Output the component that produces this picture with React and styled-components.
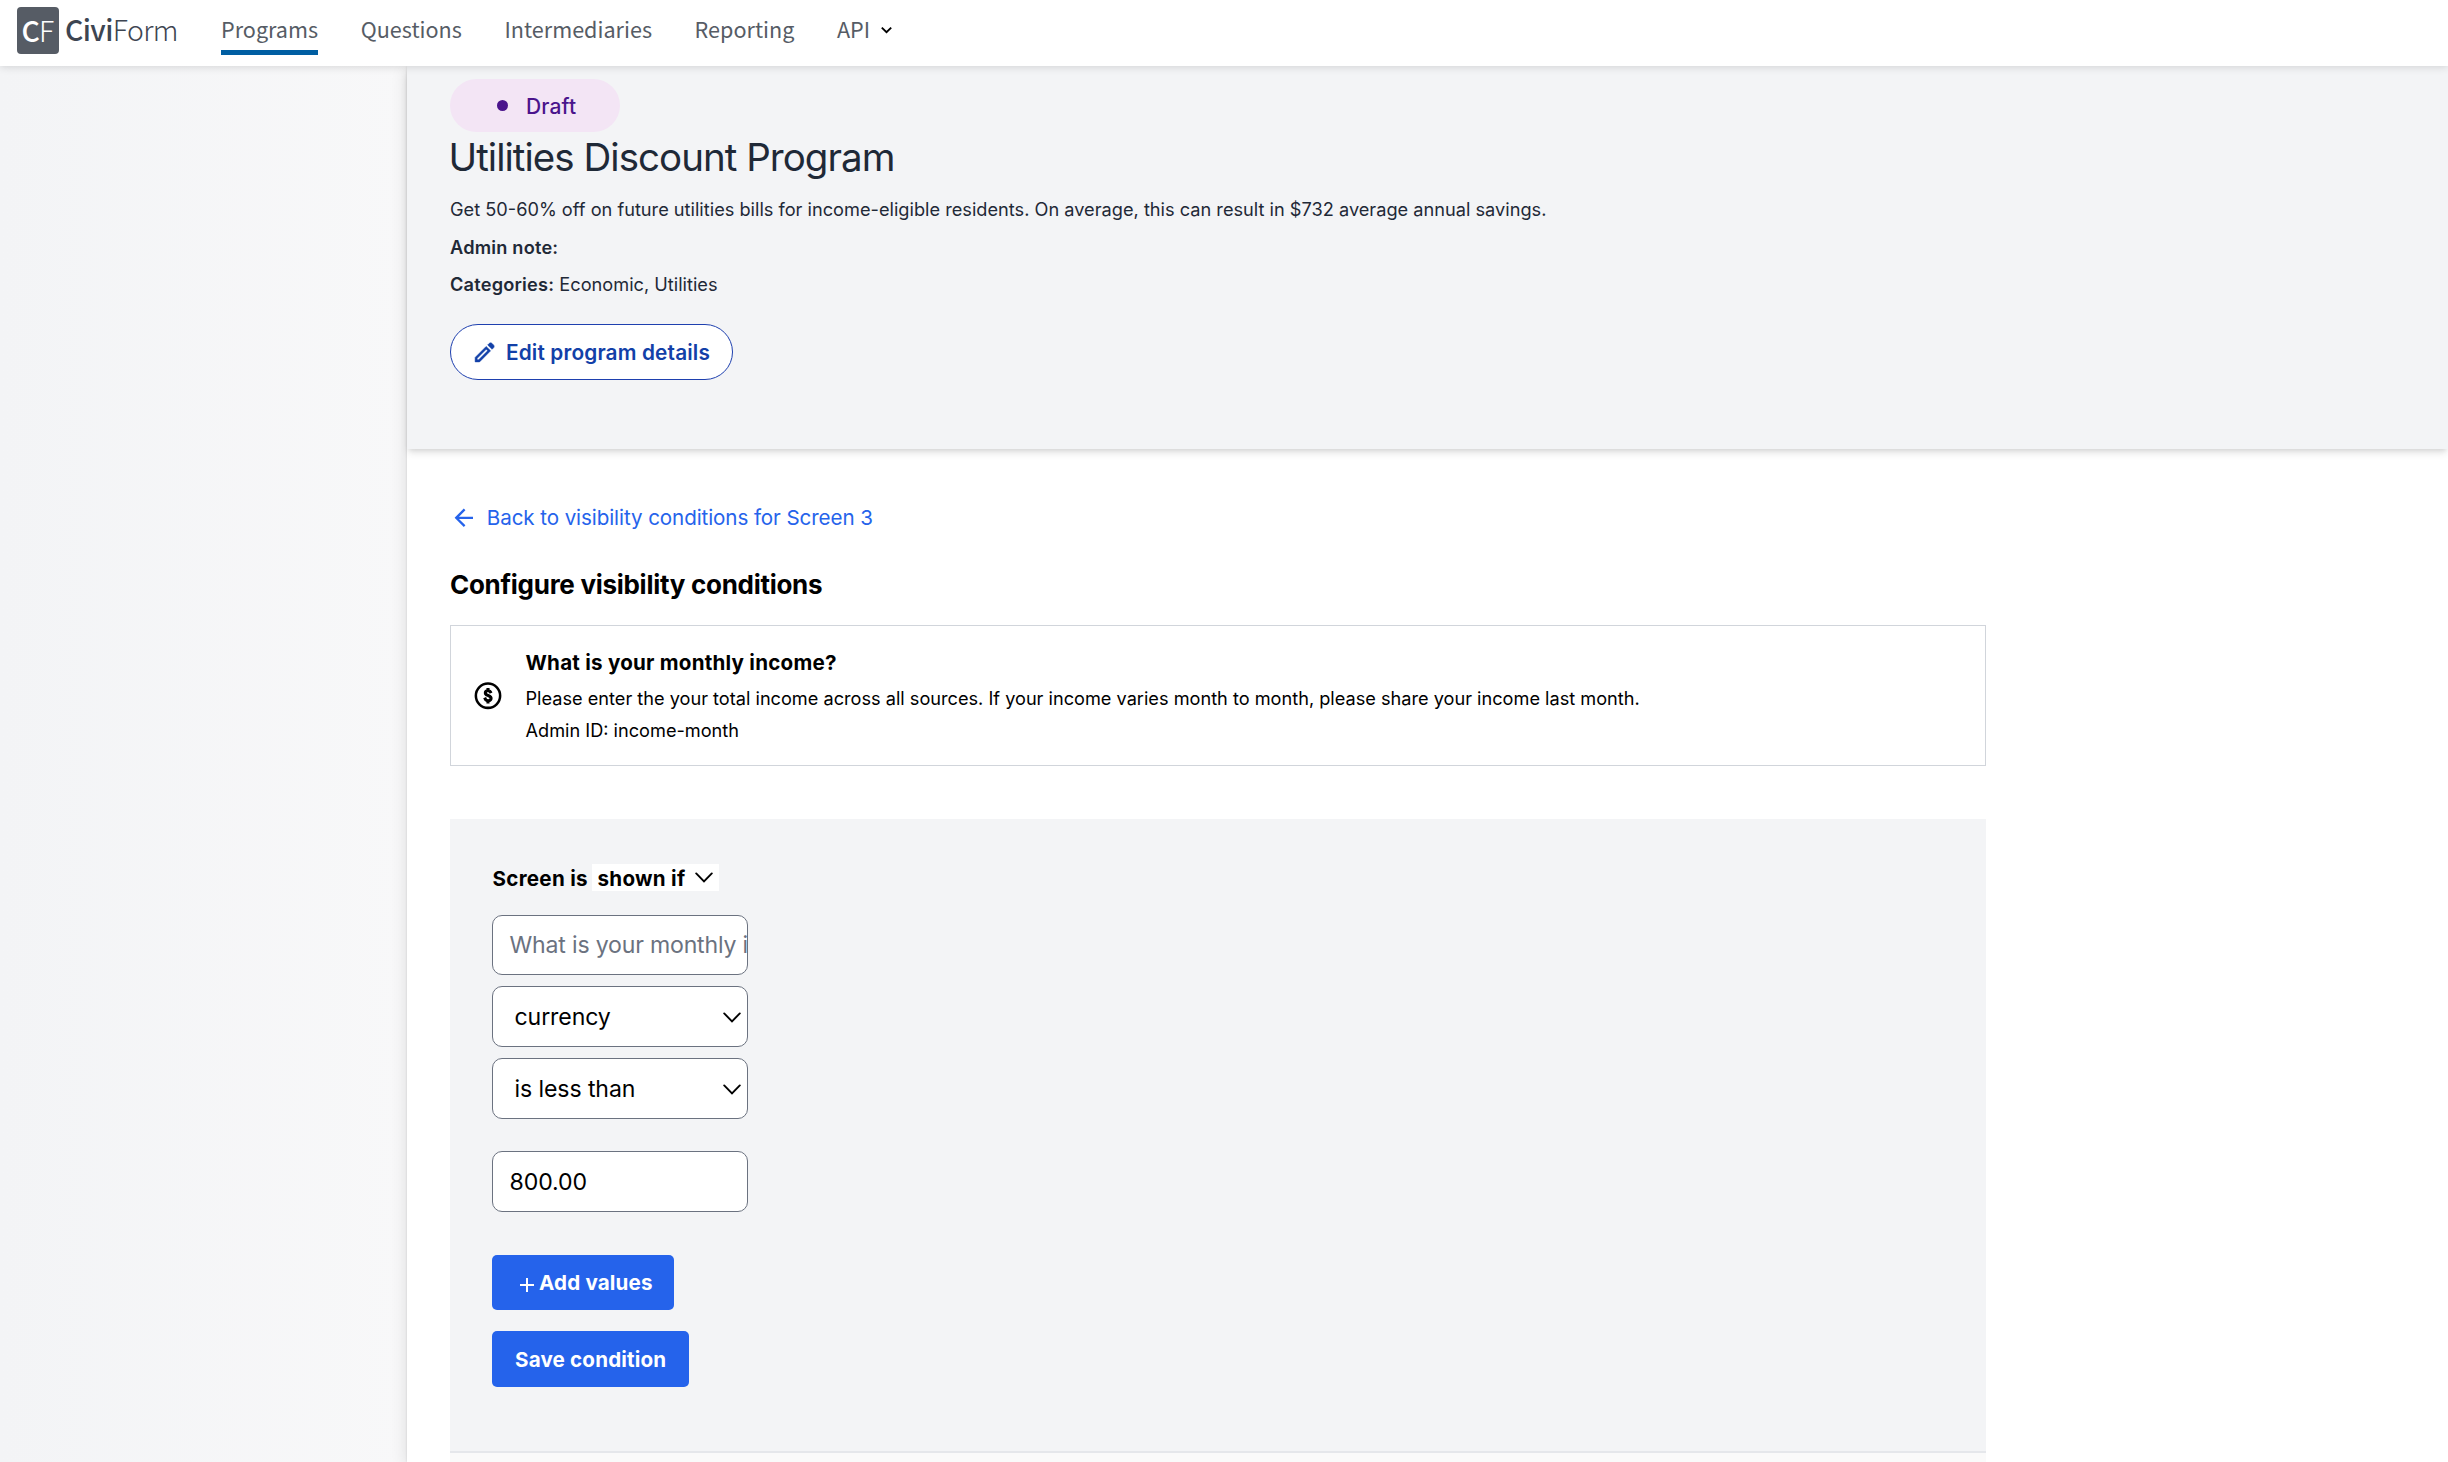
import React from "react";
import styled, { createGlobalStyle } from "styled-components";

const GlobalStyle = createGlobalStyle`
  *, *::before, *::after { box-sizing: border-box; }
  body {
    margin: 0;
    background: #fff;
    color: #000;
    font-family: Inter, "Liberation Sans", sans-serif;
  }
`;

const Page = styled.div`
  display: flex;
  flex-direction: column;
  height: 1462px;
  overflow: hidden;
`;

/* ---------- top navigation ---------- */

const TopBar = styled.header`
  position: relative;
  z-index: 2;
  display: flex;
  align-items: flex-start;
  flex: none;
  height: 66px;
  padding-left: 17px;
  background: #fff;
  box-shadow: 0 1px 8px rgba(0, 0, 0, 0.14);
  font-family: "Noto Sans CJK SC", "Noto Sans", sans-serif;
`;

const Brand = styled.a`
  display: flex;
  gap: 6px;
  width: 204px;
  padding-top: 7px;
  color: #3d4551;
  font-size: 28.4px;
  line-height: 42px;
  white-space: pre;
`;

const BrandMark = styled.span`
  display: flex;
  width: 42px;
  height: 47px;
  padding: 2px 0 0 4.5px;
  border-radius: 4px;
  background: #565c65;
  color: #fff;
  letter-spacing: -0.8px;
`;

const BrandName = styled.span`
  padding-top: 1px;
  letter-spacing: -0.6px;
`;

const Strong = styled.span`
  font-weight: 500;
`;

const Thin = styled.span`
  font-weight: 300;
`;

const Nav = styled.nav`
  display: flex;
  gap: 42.6px;
  padding-top: 16px;
`;

const NavLink = styled.a`
  display: flex;
  align-items: center;
  gap: 10.5px;
  height: 39px;
  padding-bottom: 8px;
  border-bottom: 5px solid ${(p) => (p.$active ? "#005ea2" : "transparent")};
  color: #565c65;
  font-size: 21.6px;
  line-height: 26px;

  svg {
    margin-top: 2px;
  }
`;

/* ---------- page frame ---------- */

const Frame = styled.div`
  display: flex;
  flex: 1;
  min-height: 0;
`;

const Sidebar = styled.aside`
  flex: none;
  width: 407px;
  background: linear-gradient(to right, #f3f4f6, #f8f8f9);
`;

const Main = styled.main`
  flex: 1;
  background: #fff;
  box-shadow: 0 0 2px rgba(0, 0, 0, 0.12), 0 4px 16px rgba(0, 0, 0, 0.12);
`;

const ProgramHeader = styled.section`
  display: flex;
  flex-direction: column;
  align-items: flex-start;
  height: 383px;
  padding: 13px 43px 0;
  background: #f3f4f6;
  color: #1f2937;
  box-shadow: 0 5px 8px -1px rgba(0, 0, 0, 0.1), 0 3px 5px -2px rgba(0, 0, 0, 0.1);
`;

const StatusPill = styled.div`
  display: flex;
  align-items: center;
  gap: 18px;
  width: 170px;
  height: 53px;
  padding-left: 46.5px;
  border-radius: 27px;
  background: #f3e5f5;
  color: #4a148c;
  font-size: 21px;
  font-weight: 500;
  letter-spacing: 0.15px;
`;

const StatusText = styled.span`
  padding-top: 1px;
`;

const Dot = styled.span`
  width: 11.5px;
  height: 11.5px;
  border-radius: 50%;
  background: currentColor;
`;

const ProgramTitle = styled.h1`
  margin: 1px 0 15px -1.5px;
  font-size: 38.5px;
  font-weight: 400;
  line-height: 49px;
  letter-spacing: -0.97px;
`;

const ProgramText = styled.p`
  margin: 0 0 ${(p) => p.$after}px;
  font-size: 18.2px;
  line-height: 25px;
  white-space: pre;
`;

const Label = styled.span`
  font-weight: 600;
  letter-spacing: 0.2px;
`;

const EditButton = styled.button`
  display: flex;
  align-items: center;
  gap: 9.5px;
  width: 283px;
  height: 56px;
  padding: 0 0 0 20.5px;
  border: 1px solid #1e40af;
  border-radius: 28px;
  background: #fff;
  color: #1240a8;
  font-family: inherit;
  font-size: 20.8px;
  font-weight: 600;
  letter-spacing: 0.15px;
`;

/* ---------- condition editor ---------- */

const Content = styled.section`
  display: flex;
  flex-direction: column;
  width: 1622px;
  padding: 55px 43px 0;
`;

const BackLink = styled.a`
  display: flex;
  align-items: center;
  gap: 9.2px;
  height: 28px;
  color: #2563eb;
  font-size: 20.6px;
  line-height: 28px;
  letter-spacing: -0.09px;
`;

const Heading = styled.h2`
  margin: 36px 0 23px;
  font-size: 26px;
  font-weight: 700;
  line-height: 34px;
  letter-spacing: -0.28px;
`;

const QuestionCard = styled.div`
  display: flex;
  align-items: center;
  gap: 21.5px;
  height: 141px;
  padding-left: 21px;
  border: 1px solid #d1d5db;
`;

const QuestionTitle = styled.div`
  margin-bottom: 9px;
  font-size: 20.6px;
  font-weight: 700;
  line-height: 28px;
  letter-spacing: 0.23px;
`;

const QuestionText = styled.div`
  font-size: 18.17px;
  line-height: 24px;

  & + & {
    margin-top: 8px;
  }
`;

const ConditionPanel = styled.div`
  display: flex;
  flex-direction: column;
  align-items: flex-start;
  height: 634px;
  margin-top: 53px;
  padding: 45px 42px 0;
  border-bottom: 2px solid #e5e7eb;
  background: #f3f4f6;
`;

const PanelFooter = styled.div`
  height: 20px;
  background: #fafafa;
`;

const ActionRow = styled.div`
  display: flex;
  height: 27px;
  margin-bottom: 24px;
  font-size: 20.6px;
  font-weight: 650;
  line-height: 29px;
  letter-spacing: 0.28px;
`;

const ActionLabel = styled.span`
  width: 100px;
  padding-left: 0.5px;
`;

const ActionSelect = styled.div`
  display: flex;
  justify-content: space-between;
  width: 127px;
  padding: 0 6px 0 5.5px;
  background: #fff;

  svg {
    margin-top: 8px;
  }
`;

const Field = styled.div`
  display: flex;
  align-items: center;
  justify-content: space-between;
  width: 256px;
  height: ${(p) => p.$height || 61}px;
  margin-bottom: ${(p) => p.$after}px;
  padding: ${(p) => (p.$select ? "1px 6px 0 21.5px" : "0 0 0 16.5px")};
  border: 1px solid #6b7280;
  border-radius: 10px;
  background: #fff;
  color: ${(p) => (p.$muted ? "#6b7280" : "#000")};
  font-size: 23.1px;
  letter-spacing: ${(p) => (p.$muted ? "-0.19px" : "-0.1px")};
  white-space: nowrap;
  overflow: hidden;
`;

const PrimaryButton = styled.button`
  display: flex;
  align-items: center;
  gap: 5px;
  width: ${(p) => p.$width}px;
  height: ${(p) => p.$height}px;
  margin-bottom: 21px;
  padding: 0 0 0 ${(p) => p.$indent}px;
  border: 0;
  border-radius: 5px;
  background: #2563eb;
  color: #fff;
  font-family: inherit;
  font-size: 20.6px;
  font-weight: 700;
  letter-spacing: 0.17px;

  svg {
    margin-top: 5px;
  }
`;

/* ---------- icons ---------- */

const NavChevron = () => (
  <svg width="11" height="8" viewBox="0 0 11 8" fill="none" stroke="#000" strokeWidth="1.9">
    <path d="M0.8 1.6 5.5 6.1 10.2 1.6" />
  </svg>
);

const SelectChevron = () => (
  <svg width="18" height="11" viewBox="0 0 18 11" fill="none" stroke="#000" strokeWidth="1.9" strokeLinecap="round">
    <path d="M1.2 1.4 9 9.4 16.8 1.4" />
  </svg>
);

const PencilIcon = () => (
  <svg width="25" height="25" viewBox="0 0 24 24" fill="currentColor" stroke="currentColor" strokeWidth="0.5">
    <path d="M5 19h1.4l8.625-8.625-1.4-1.4L5 17.6ZM19.3 8.925l-4.25-4.2 1.4-1.4q.575-.575 1.413-.575.837 0 1.412.575l1.4 1.4q.575.575.6 1.388.025.812-.55 1.387ZM17.85 10.4 7.25 21H3v-4.25l10.6-10.6Z" />
  </svg>
);

const BackArrow = () => (
  <svg width="27.6" height="27.6" viewBox="0 0 24 24" fill="currentColor">
    <path d="M20 11H7.83l5.59-5.59L12 4l-8 8 8 8 1.41-1.41L7.83 13H20v-2z" />
  </svg>
);

const CurrencyIcon = () => (
  <svg width="32" height="32" viewBox="0 0 24 24">
    <circle cx="12" cy="11.8" r="9.1" fill="none" stroke="#000" strokeWidth="1.9" />
    <path
      transform="translate(12 11.8) scale(.76) translate(-12 -12)"
      stroke="#000"
      strokeWidth="1.3"
      d="M12.89 11.1c-1.78-.59-2.64-.96-2.64-1.9 0-1.02 1.11-1.39 1.81-1.39 1.31 0 1.79.99 1.9 1.34l1.58-.67c-.15-.44-.82-1.91-2.66-2.23V5h-1.75v1.26c-2.6.56-2.62 2.85-2.62 2.96 0 2.27 2.25 2.91 3.35 3.31 1.58.56 2.28 1.07 2.28 2.03 0 1.13-1.05 1.61-1.98 1.61-1.82 0-2.34-1.87-2.4-2.09l-1.66.67c.63 2.19 2.28 2.78 3.02 2.96V19h1.75v-1.24c.52-.09 3.02-.59 3.02-3.22.01-1.39-.6-2.61-3-3.44z"
    />
  </svg>
);

const PlusIcon = () => (
  <svg width="14" height="14" viewBox="0 0 14 14" stroke="currentColor" strokeWidth="2">
    <path d="M7 0V14M0 7H14" />
  </svg>
);

export default function App() {
  return (
    <Page>
      <GlobalStyle />
      <TopBar>
        <Brand>
          <BrandMark>
            <Strong>C</Strong>
            <Thin>F</Thin>
          </BrandMark>
          <BrandName>
            <Strong>Civi</Strong>
            <Thin>Form</Thin>
          </BrandName>
        </Brand>
        <Nav>
          <NavLink $active>Programs</NavLink>
          <NavLink>Questions</NavLink>
          <NavLink>Intermediaries</NavLink>
          <NavLink>Reporting</NavLink>
          <NavLink>
            API
            <NavChevron />
          </NavLink>
        </Nav>
      </TopBar>
      <Frame>
        <Sidebar />
        <Main>
          <ProgramHeader>
            <StatusPill>
              <Dot />
              <StatusText>Draft</StatusText>
            </StatusPill>
            <ProgramTitle>Utilities Discount Program</ProgramTitle>
            <ProgramText $after={13}>
              Get 50-60% off on future utilities bills for income-eligible residents. On average, this can result in $732 average annual savings.
            </ProgramText>
            <ProgramText $after={12}>
              <Label>Admin note:</Label>
            </ProgramText>
            <ProgramText $after={27}>
              <Label>Categories:</Label> Economic, Utilities
            </ProgramText>
            <EditButton>
              <PencilIcon />
              Edit program details
            </EditButton>
          </ProgramHeader>
          <Content>
            <BackLink>
              <BackArrow />
              Back to visibility conditions for Screen 3
            </BackLink>
            <Heading>Configure visibility conditions</Heading>
            <QuestionCard>
              <CurrencyIcon />
              <div>
                <QuestionTitle>What is your monthly income?</QuestionTitle>
                <QuestionText>
                  Please enter the your total income across all sources. If your income varies month to month, please share your income last month.
                </QuestionText>
                <QuestionText>Admin ID: income-month</QuestionText>
              </div>
            </QuestionCard>
            <ConditionPanel>
              <ActionRow>
                <ActionLabel>Screen is</ActionLabel>
                <ActionSelect>
                  shown if
                  <SelectChevron />
                </ActionSelect>
              </ActionRow>
              <Field $height={60} $after={11} $muted>
                What is your monthly income?
              </Field>
              <Field $after={11} $select>
                currency
                <SelectChevron />
              </Field>
              <Field $after={32} $select>
                is less than
                <SelectChevron />
              </Field>
              <Field $after={43}>800.00</Field>
              <PrimaryButton $width={182} $height={55} $indent={28}>
                <PlusIcon />
                Add values
              </PrimaryButton>
              <PrimaryButton $width={197} $height={56} $indent={23}>
                Save condition
              </PrimaryButton>
            </ConditionPanel>
            <PanelFooter />
          </Content>
        </Main>
      </Frame>
    </Page>
  );
}
